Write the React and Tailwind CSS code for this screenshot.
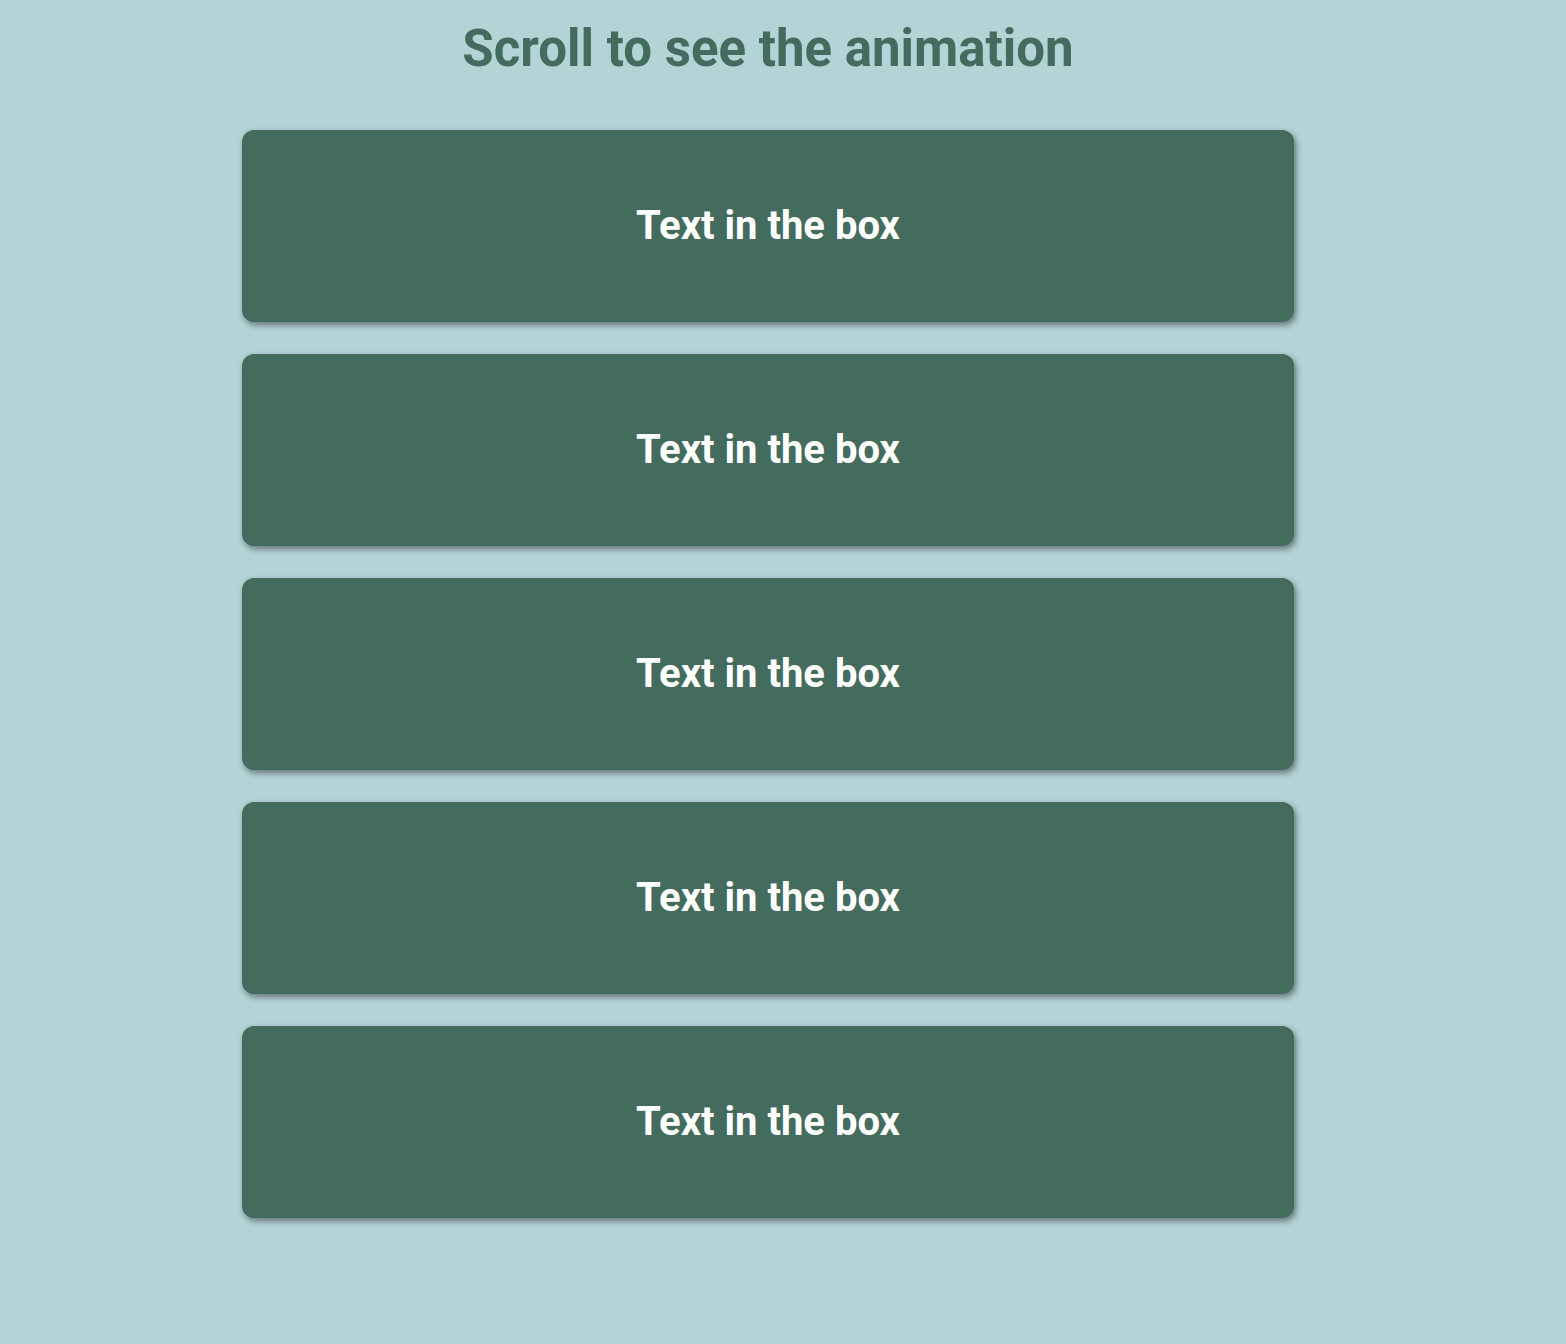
import React from "react";

function App() {
  const boxes = [1, 2, 3, 4, 5];

  return (
    <div
      className="min-h-screen bg-[#b4d3d7]"
      style={{ fontFamily: "Roboto, 'Liberation Sans', sans-serif" }}
    >
      <div className="w-[1536px] flex flex-col items-center">
        <h1 className="text-[51px] font-bold text-[#436b5e] leading-none mt-[23px] mb-[56px]">
          Scroll to see the animation
        </h1>
        <div className="flex flex-col gap-8">
          {boxes.map((b) => (
            <div
              key={b}
              className="w-[1052px] h-[192px] bg-[#436b5e] rounded-xl flex items-center justify-center shadow-[2px_3px_6px_rgba(0,0,0,0.45)]"
            >
              <h2 className="text-[40px] font-bold text-white">Text in the box</h2>
            </div>
          ))}
        </div>
      </div>
    </div>
  );
}

export default App;
